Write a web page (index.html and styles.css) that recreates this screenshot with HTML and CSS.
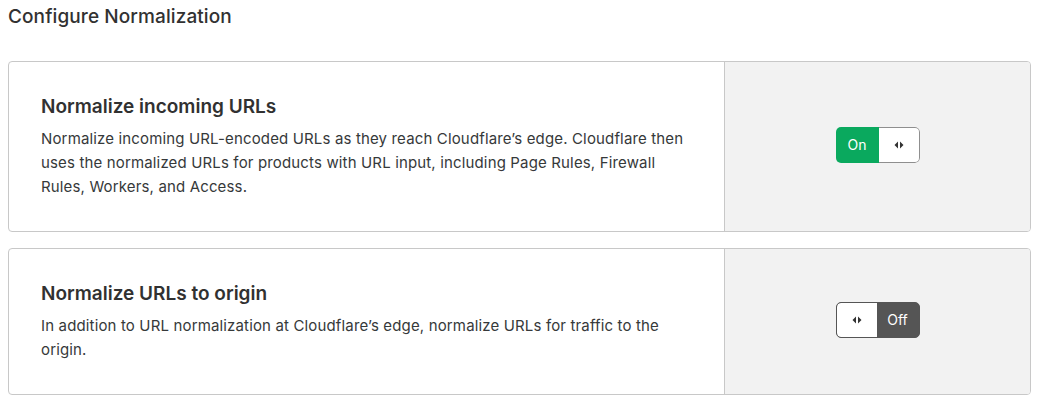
FILE: index.html
```html
<!DOCTYPE html>
<html>
<head>
<meta charset="utf-8">
<link rel="stylesheet" href="styles.css">
</head>
<body>
<h2 class="page-title">Configure Normalization</h2>
<div class="cards">
  <section class="card">
    <div class="card-main">
      <h3 class="card-title">Normalize incoming URLs</h3>
      <p class="card-desc">Normalize incoming URL-encoded URLs as they reach Cloudflare’s edge. Cloudflare then uses the normalized URLs for products with URL input, including Page Rules, Firewall Rules, Workers, and Access.</p>
    </div>
    <div class="card-side">
      <div class="toggle toggle-on">
        <span class="toggle-label">On</span>
        <span class="toggle-knob"><svg width="10" height="8" viewBox="0 0 10 8"><path d="M4 0.5 L0.5 4 L4 7.5 Z M6 0.5 L9.5 4 L6 7.5 Z" fill="#333"/></svg></span>
      </div>
    </div>
  </section>
  <section class="card">
    <div class="card-main">
      <h3 class="card-title">Normalize URLs to origin</h3>
      <p class="card-desc">In addition to URL normalization at Cloudflare’s edge, normalize URLs for traffic to the origin.</p>
    </div>
    <div class="card-side">
      <div class="toggle toggle-off">
        <span class="toggle-knob"><svg width="10" height="8" viewBox="0 0 10 8"><path d="M4 0.5 L0.5 4 L4 7.5 Z M6 0.5 L9.5 4 L6 7.5 Z" fill="#333"/></svg></span>
        <span class="toggle-label">Off</span>
      </div>
    </div>
  </section>
</div>
</body>
</html>
```

FILE: styles.css
```css
* { box-sizing: border-box; }
body {
  margin: 0;
  padding: 5px 12px 0 8px;
  font-family: Inter, "Noto Sans", sans-serif;
  color: #313131;
  background: #fff;
}
.page-title {
  margin: 0 0 32px 0;
  font-size: 19px;
  font-weight: 500;
  line-height: 24px;
  letter-spacing: 0.1px;
  color: #313131;
}
.cards {
  display: flex;
  flex-direction: column;
  gap: 16px;
}
.card {
  display: flex;
  border: 1px solid #c8c8c8;
  border-radius: 4px;
  overflow: hidden;
}
.card-main {
  flex: 0 0 715px;
  padding: 32px;
}
.card-title {
  margin: 0 0 8px 0;
  font-size: 19px;
  font-weight: 600;
  line-height: 25px;
  color: #313131;
}
.card-desc {
  margin: 0;
  font-size: 15px;
  line-height: 24px;
  letter-spacing: 0.15px;
  color: #36393a;
}
.card-side {
  flex: 1;
  background: #f2f2f2;
  border-left: 1px solid #c8c8c8;
  display: flex;
  align-items: center;
  justify-content: center;
  padding-bottom: 4px;
}
.toggle {
  display: flex;
  width: 84px;
  height: 36px;
  border-radius: 5px;
  overflow: hidden;
  font-size: 14px;
}
.toggle-label {
  display: flex;
  align-items: center;
  justify-content: center;
  color: #fff;
}
.toggle-knob {
  display: flex;
  align-items: center;
  justify-content: center;
  background: #fff;
}
.toggle-on .toggle-label { flex: 0 0 43px; background: #0aa95e; }
.toggle-on .toggle-knob { flex: 1; border: 1px solid #8f8f8f; border-left: none; border-radius: 0 5px 5px 0; }
.toggle-off { border: 1px solid #555; background: #555; }
.toggle-off .toggle-knob { flex: 0 0 40px; border-radius: 4px 0 0 4px; }
.toggle-off .toggle-label { flex: 1; }
```
